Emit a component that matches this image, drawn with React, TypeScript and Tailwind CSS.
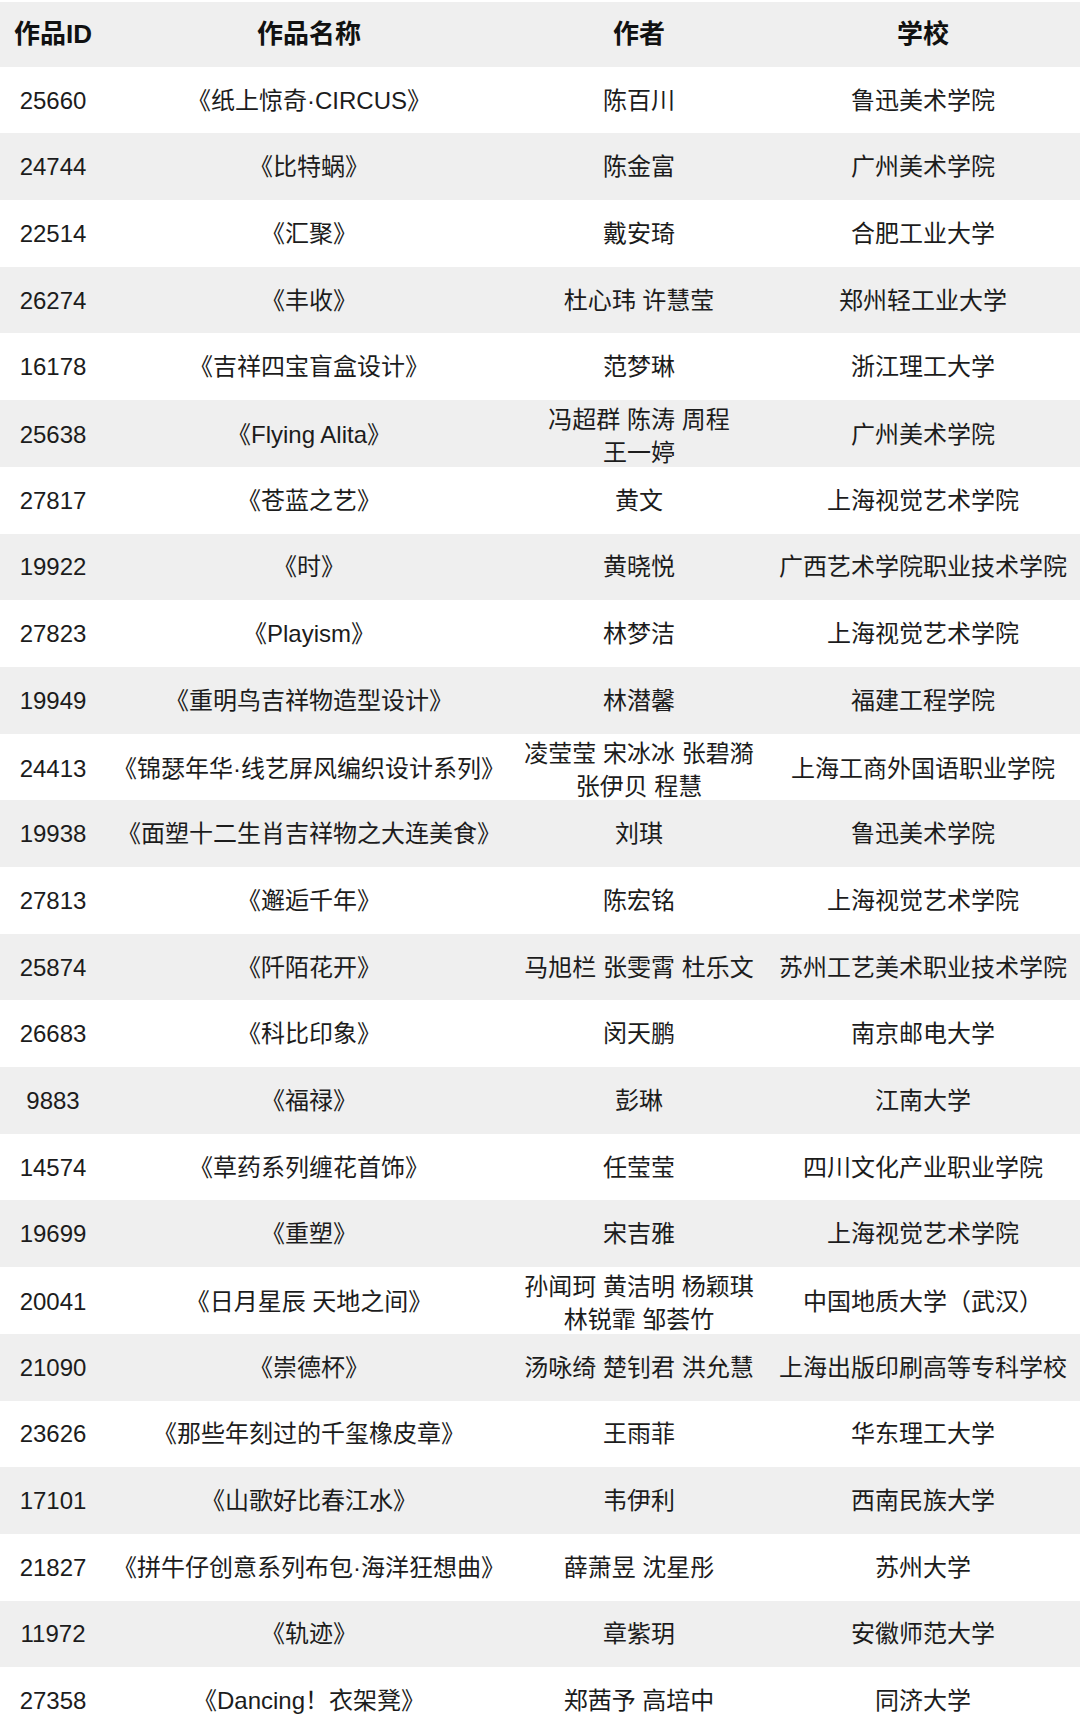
import React from "react";

type Row = { id: string; name: string; author: string[]; school: string };

const rows: Row[] = [
  { id: "25660", name: "《纸上惊奇·CIRCUS》", author: ["陈百川"], school: "鲁迅美术学院" },
  { id: "24744", name: "《比特蜗》", author: ["陈金富"], school: "广州美术学院" },
  { id: "22514", name: "《汇聚》", author: ["戴安琦"], school: "合肥工业大学" },
  { id: "26274", name: "《丰收》", author: ["杜心玮 许慧莹"], school: "郑州轻工业大学" },
  { id: "16178", name: "《吉祥四宝盲盒设计》", author: ["范梦琳"], school: "浙江理工大学" },
  { id: "25638", name: "《Flying Alita》", author: ["冯超群 陈涛 周程", "王一婷"], school: "广州美术学院" },
  { id: "27817", name: "《苍蓝之艺》", author: ["黄文"], school: "上海视觉艺术学院" },
  { id: "19922", name: "《时》", author: ["黄晓悦"], school: "广西艺术学院职业技术学院" },
  { id: "27823", name: "《Playism》", author: ["林梦洁"], school: "上海视觉艺术学院" },
  { id: "19949", name: "《重明鸟吉祥物造型设计》", author: ["林潜馨"], school: "福建工程学院" },
  { id: "24413", name: "《锦瑟年华·线艺屏风编织设计系列》", author: ["凌莹莹 宋冰冰 张碧漪", "张伊贝 程慧"], school: "上海工商外国语职业学院" },
  { id: "19938", name: "《面塑十二生肖吉祥物之大连美食》", author: ["刘琪"], school: "鲁迅美术学院" },
  { id: "27813", name: "《邂逅千年》", author: ["陈宏铭"], school: "上海视觉艺术学院" },
  { id: "25874", name: "《阡陌花开》", author: ["马旭栏 张雯霄 杜乐文"], school: "苏州工艺美术职业技术学院" },
  { id: "26683", name: "《科比印象》", author: ["闵天鹏"], school: "南京邮电大学" },
  { id: "9883", name: "《福禄》", author: ["彭琳"], school: "江南大学" },
  { id: "14574", name: "《草药系列缠花首饰》", author: ["任莹莹"], school: "四川文化产业职业学院" },
  { id: "19699", name: "《重塑》", author: ["宋吉雅"], school: "上海视觉艺术学院" },
  { id: "20041", name: "《日月星辰 天地之间》", author: ["孙闻珂 黄洁明 杨颖琪", "林锐霏 邹荟竹"], school: "中国地质大学（武汉）" },
  { id: "21090", name: "《崇德杯》", author: ["汤咏绮 楚钊君 洪允慧"], school: "上海出版印刷高等专科学校" },
  { id: "23626", name: "《那些年刻过的千玺橡皮章》", author: ["王雨菲"], school: "华东理工大学" },
  { id: "17101", name: "《山歌好比春江水》", author: ["韦伊利"], school: "西南民族大学" },
  { id: "21827", name: "《拼牛仔创意系列布包·海洋狂想曲》", author: ["薛萧昱 沈星彤"], school: "苏州大学" },
  { id: "11972", name: "《轨迹》", author: ["章紫玥"], school: "安徽师范大学" },
  { id: "27358", name: "《Dancing！衣架凳》", author: ["郑茜予 高培中"], school: "同济大学" },
];

const cell = "flex items-center justify-center text-center";

export default function App() {
  return (
    <div
      className="w-[1080px] h-[1734px] bg-white text-[#1c1c1c] grid grid-rows-[repeat(26,minmax(0,1fr))] text-[24px] leading-[33px]"
      style={{ fontFamily: '"Liberation Sans", "Noto Sans CJK SC", sans-serif' }}
    >
      <div className="grid grid-cols-[106px_406px_254px_314px] bg-[#efefef] border-t-2 border-white font-bold text-[26px] text-[#111]">
        <div className={cell}>作品ID</div>
        <div className={cell}>作品名称</div>
        <div className={cell}>作者</div>
        <div className={cell}>学校</div>
      </div>
      {rows.map((r, i) => (
        <div
          key={r.id}
          className={
            "grid grid-cols-[106px_406px_254px_314px] " +
            (i % 2 === 1 ? "bg-[#efefef]" : "bg-white")
          }
        >
          <div className={cell}>{r.id}</div>
          <div className={cell + " whitespace-nowrap"}>{r.name}</div>
          <div
            className={
              cell + " flex-col whitespace-nowrap" + (r.author.length > 1 ? " pt-[3px]" : "")
            }
          >
            {r.author.map((a) => (
              <span key={a}>{a}</span>
            ))}
          </div>
          <div className={cell + " whitespace-nowrap"}>{r.school}</div>
        </div>
      ))}
    </div>
  );
}
